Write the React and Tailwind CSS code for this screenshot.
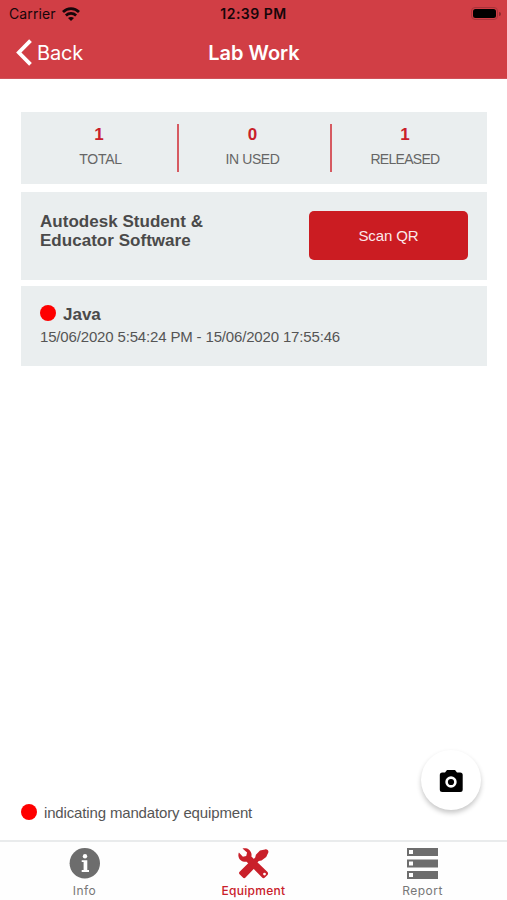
const stats = [
  { value: 1, label: 'TOTAL' },
  { value: 0, label: 'IN USED' },
  { value: 1, label: 'RELEASED' },
];

const InfoIcon = () => (
  <svg className="w-[31px] h-[31px]" viewBox="0 0 31 31" fill="none">
    <circle cx="15.8" cy="15.3" r="15.2" fill="#6d6d6d" />
    <circle cx="16" cy="8.2" r="2.2" fill="#fff" />
    <path d="M12.7 12.2h5.6v9.9H20V24h-7.3v-1.9h1.9v-8h-1.9z" fill="#fff" />
  </svg>
);

const ToolsIcon = () => (
  <svg className="w-[31px] h-[31px]" viewBox="0 0 31 31" fill="#c9202a">
    {/* Screwdriver */}
    <path d="M27 1.4c1.8-.9 4 1.100 3.300 3L28.200 9l-4.700 3.600-2.700.5-2.500 2.500-3.600-3.600 2.500-2.500.7-2.700 4.100-4.200z" />
    <path d="M12 13.500l5.600 5.600L7.500 29.600c-.7.800-1.900.800-2.600 0l-3.300-3.300c-.7-.7-.7-1.800 0-2.500z" />
    {/* Wrench */}
    <path
      d="M4.500.6c4-1.300 8.100.9 8.900 5 .2 1 .2 1.900 0 2.800l16.100 15.700c.8.800.8 2 0 2.800l-2.600 2.700c-.8.8-2 .8-2.800 0L8.600 13.700C4.800 14.300.9 12 .4 8 .3 6.700.4 5.600.9 4.500l4 4.200 3.300-.7.900-3.400zM26.500 24.700a1.400 1.400 0 1 0 .01 2.800 1.400 1.400 0 0 0-.01-2.800z"
      fillRule="evenodd"
    />
  </svg>
);

const ReportIcon = () => (
  <svg className="w-[31px] h-[31px]" viewBox="0 0 31 31">
    {[0, 11.5, 23].map((y) => (
      <g key={y}>
        <rect x="0" y={y} width="31" height="8" fill="#6d6d6d" />
        <rect x="2" y={y + 2} width="4" height="4" fill="#fff" />
      </g>
    ))}
  </svg>
);

const tabs = [
  { label: 'Info', icon: InfoIcon },
  { label: 'Equipment', icon: ToolsIcon, active: true },
  { label: 'Report', icon: ReportIcon },
];

function StatusBar() {
  return (
    <div className="grid grid-cols-3 items-center h-[27px] text-[#16060a]">
      <div className="flex items-center pl-[9px] gap-[6px] text-[14px]">
        <span className="tracking-[0.1px]">Carrier</span>
        <svg className="w-[18px] h-[14px]" viewBox="0 0 18 14" fill="none" stroke="currentColor" strokeWidth="2.700">
          <path d="M1 5C5.400.500 12.600.500 17 5" />
          <path d="M3.900 8.500c2.900-2.800 7.300-2.800 10.200 0" />
          <path d="M6 11c1.700-1.500 4.300-1.500 6 0l-3 2.900z" fill="currentColor" stroke="none" />
        </svg>
      </div>
      <div className="text-center text-[14px] font-semibold tracking-[0.5px]">12:39 PM</div>
      <div className="flex items-center justify-end pr-[6px] gap-px">
        <div className="w-[27px] h-[13px] rounded-[4px] border border-[#a8333a] p-px">
          <div className="h-full rounded-[2.5px] bg-black" />
        </div>
        <div className="w-[2px] h-[4px] rounded-r-full bg-[#8e2a30]" />
      </div>
    </div>
  );
}

function Header() {
  return (
    <header className="h-[79px] bg-[#d13e45] border-b border-[#d0525a]">
      <StatusBar />
      <div className="grid grid-cols-3 items-center h-[51px] text-white">
        <button className="flex items-center pl-[16px] gap-[5px] text-[20px]">
          <svg className="w-[16px] h-[27px]" viewBox="0 0 16 27" fill="none" stroke="currentColor" strokeWidth="3.8">
            <path d="M14.5 1.6L2.8 13.5l11.7 11.9" />
          </svg>
          <span className="tracking-[-0.2px]">Back</span>
        </button>
        <h1 className="pl-px text-center text-[20px] font-semibold">Lab Work</h1>
      </div>
    </header>
  );
}

export default function App() {
  return (
    <div className="w-[507px] h-[900px] flex flex-col bg-white overflow-hidden font-['Inter',sans-serif]">
      <Header />

      <main className="flex-1 flex flex-col pt-[33px] px-[21px] font-['Liberation_Sans',Arial,sans-serif] text-[#4a4a4a]">
        {/* Summary */}
        <section className="h-[72px] w-[466px] bg-[#eaeeef] flex pt-[12px]">
          {stats.map((stat, i) => (
            <div
              key={stat.label}
              className={`h-[48px] flex flex-col items-center ${i < 2 ? 'border-r-2 border-[#d65a61]' : ''} ${
                i === 0 ? 'w-[158px]' : i === 1 ? 'w-[153px] pr-[4px]' : 'w-[155px] pr-[9px]'
              }`}
            >
              <span className="text-[17px] leading-[21px] font-bold text-[#c9202a]">{stat.value}</span>
              <span
                className={`mt-[4px] text-[14px] leading-[20px] text-[#666] ${
                  i === 0 ? 'ml-[3px] tracking-[-0.3px]' : i === 1 ? 'tracking-[-0.4px]' : 'tracking-[-0.7px]'
                }`}
              >
                {stat.label}
              </span>
            </div>
          ))}
        </section>

        {/* Equipment waiting for a scan */}
        <section className="mt-[8px] h-[88px] w-[466px] bg-[#eaeeef] flex justify-between pl-[19px] pr-[19px] pt-[19px]">
          <h2 className="w-[200px] pt-px text-[17px] leading-[19px] font-bold tracking-[0.03px]">
            Autodesk Student &amp; Educator Software
          </h2>
          <button className="w-[159px] h-[49px] rounded-[5px] bg-[#cb1c22] text-[#fbe9ea] text-[15px] pt-px tracking-[-0.1px]">
            Scan QR
          </button>
        </section>

        {/* Released equipment */}
        <section className="mt-[6px] h-[80px] w-[466px] bg-[#eaeeef] pl-[19px] pt-[19px]">
          <div className="flex items-center gap-[7px] h-[20px]">
            <span className="size-[16px] mb-[4px] rounded-full bg-[#fe0000]" />
            <h2 className="text-[17px] leading-[20px] font-bold">Java</h2>
          </div>
          <p className="mt-[3px] text-[15px] leading-[18px] tracking-[-0.16px] text-[#555]">
            15/06/2020 5:54:24 PM - 15/06/2020 17:55:46
          </p>
        </section>

        {/* Legend and camera button */}
        <div className="mt-auto h-[90px] flex justify-between">
          <div className="flex items-center gap-[7px] h-[16px] mt-[54px]">
            <span className="size-[16px] rounded-full bg-[#fe0000]" />
            <span className="pt-px text-[15px] leading-[16px] tracking-[-0.15px] text-[#555]">
              indicating mandatory equipment
            </span>
          </div>
          <button className="size-[60px] mr-[5px] pt-px rounded-full bg-white flex items-center justify-center shadow-[0_3px_5px_rgba(0,0,0,0.22)]">
            <svg className="w-[24px] h-[24px]" viewBox="0 0 24 24" fillRule="evenodd">
              <path d="M8 1h8l2 2.500h3.200a2.500 2.500 0 0 1 2.500 2.500v14.500a2.500 2.500 0 0 1-2.500 2.500H3.300A2.500 2.500 0 0 1 .8 20.500V6a2.500 2.500 0 0 1 2.500-2.500H6zM12 7.300a5.700 5.700 0 1 0 0 11.400 5.700 5.700 0 0 0 0-11.400z" />
              <circle cx="12" cy="13" r="3.1" />
            </svg>
          </button>
        </div>
      </main>

      <nav className="h-[60px] grid grid-cols-3 border-t-2 border-[#e9ebec] bg-[#fefefe]">
        {tabs.map(({ label, icon: Icon, active }) => (
          <button
            key={label}
            className={`flex flex-col items-center pt-[6px] text-[12px] leading-[16px] ${
              active ? 'text-[#c9202a] font-medium tracking-[0.3px]' : 'text-[#777] tracking-[0.5px]'
            }`}
          >
            <Icon />
            <span className="mt-[4px]">{label}</span>
          </button>
        ))}
      </nav>
    </div>
  );
}
